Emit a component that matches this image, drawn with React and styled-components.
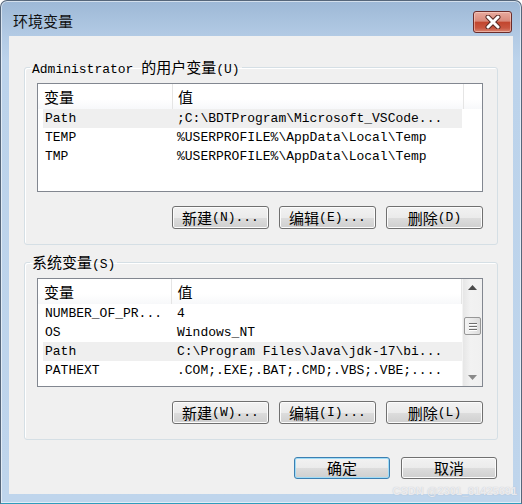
import React from "react";
import styled, { createGlobalStyle } from "styled-components";

const GlobalStyle = createGlobalStyle`
    html, body {
        margin: 0;
        padding: 0;
        background: #ffffff;
    }
    body {
        font-family: "Liberation Mono", "Noto Sans CJK SC", monospace;
    }
`;

// Split a label into latin runs and han runs so the CJK glyphs get their own size.
function Mixed({ text }) {
    const parts = text.split(/([\u4e00-\u9fff]+)/).filter(Boolean);
    return parts.map((p, i) =>
        /[\u4e00-\u9fff]/.test(p) ? <Han key={i}>{p}</Han> : <span key={i}>{p}</span>
    );
}

const userVars = [
    ["Path", ";C:\\BDTProgram\\Microsoft_VSCode...", true],
    ["TEMP", "%USERPROFILE%\\AppData\\Local\\Temp"],
    ["TMP", "%USERPROFILE%\\AppData\\Local\\Temp"],
];

const systemVars = [
    ["NUMBER_OF_PR...", "4"],
    ["OS", "Windows_NT"],
    ["Path", "C:\\Program Files\\Java\\jdk-17\\bi...", true],
    ["PATHEXT", ".COM;.EXE;.BAT;.CMD;.VBS;.VBE;...."],
];

function VarList({ rows, scroll }) {
    return (
        <ListView>
            <ListBody>
                <Header>
                    <HeadCell width={135}>
                        <Han>变量</Han>
                    </HeadCell>
                    <HeadCell width={291} pad={5}>
                        <Han>值</Han>
                    </HeadCell>
                    {!scroll && <HeadFill />}
                </Header>
                {rows.map(([name, value, hot]) => (
                    <Row key={name} hot={hot}>
                        <Cell>{name}</Cell>
                        <Cell>{value}</Cell>
                    </Row>
                ))}
            </ListBody>
            {scroll && (
                <ScrollBar>
                    <ArrowBox>
                        <svg width="9" height="5" viewBox="0 0 9 5">
                            <polygon points="0,5 4.5,0 9,5" fill="#4a4a4a" />
                        </svg>
                    </ArrowBox>
                    <Track>
                        <Thumb>
                            <Grip />
                            <Grip />
                            <Grip />
                        </Thumb>
                    </Track>
                    <ArrowBox>
                        <svg width="9" height="5" viewBox="0 0 9 5">
                            <polygon points="0,0 4.5,5 9,0" fill="#8a8a8a" />
                        </svg>
                    </ArrowBox>
                </ScrollBar>
            )}
        </ListView>
    );
}

function VarGroup({ title, rows, scroll, keys, first }) {
    return (
        <Group first={first}>
            <Legend>
                <Mixed text={title} />
            </Legend>
            <VarList rows={rows} scroll={scroll} />
            <ButtonRow>
                <Button>
                    <Mixed text={`新建(${keys[0]})...`} />
                </Button>
                <Button>
                    <Mixed text={`编辑(${keys[1]})...`} />
                </Button>
                <Button>
                    <Mixed text={`删除(${keys[2]})`} />
                </Button>
            </ButtonRow>
        </Group>
    );
}

export default function App() {
    return (
        <>
            <GlobalStyle />
            <Window>
                <TitleBar>
                    <Title>环境变量</Title>
                    <CloseButton aria-label="close">
                        <svg width="16" height="14" viewBox="0 0 16 14">
                            <path
                                d="M3 2 L13 12 M13 2 L3 12"
                                stroke="#5a2a24"
                                strokeWidth="5"
                                strokeLinecap="round"
                            />
                            <path
                                d="M3 2 L13 12 M13 2 L3 12"
                                stroke="#ffffff"
                                strokeWidth="3"
                                strokeLinecap="round"
                            />
                        </svg>
                    </CloseButton>
                </TitleBar>
                <Client>
                    <VarGroup
                        first
                        title="Administrator 的用户变量(U)"
                        rows={userVars}
                        keys={["N", "E", "D"]}
                    />
                    <VarGroup
                        title="系统变量(S)"
                        rows={systemVars}
                        scroll
                        keys={["W", "I", "L"]}
                    />
                    <Footer>
                        <Button wide isDefault>
                            <Han>确定</Han>
                        </Button>
                        <Button wide>
                            <Han>取消</Han>
                        </Button>
                    </Footer>
                </Client>
                <Watermark>CSDN @2301_81425691</Watermark>
            </Window>
        </>
    );
}

/**
 * STYLES
 */
const Han = styled.span`
    font-family: "Noto Sans CJK SC", sans-serif;
    font-size: 15px;
`;

const Window = styled.div`
    position: relative;
    width: 522px;
    height: 504px;
    box-sizing: border-box;
    display: flex;
    flex-direction: column;
    padding: 0 0 9px;
    border: 1px solid #56667a;
    border-bottom-color: #2f9cbc;
    border-radius: 7px 7px 0 0;
    background: linear-gradient(to bottom, #9db8d6 0px, #b2cae4 34px, #bcd3eb 60px, #bfd5ec 100%);
    box-shadow: inset 0 0 0 1px rgba(255, 255, 255, 0.55);
`;

const TitleBar = styled.div`
    height: 35px;
    box-sizing: border-box;
    display: flex;
    align-items: flex-start;
    justify-content: space-between;
    padding: 10px 9px 0 12px;
`;

const Title = styled.div`
    font-family: "Noto Sans CJK SC", sans-serif;
    font-size: 15px;
    line-height: 20px;
    color: #111;
`;

const CloseButton = styled.div`
    width: 39px;
    height: 22px;
    box-sizing: border-box;
    display: flex;
    align-items: center;
    justify-content: center;
    border: 1px solid #6b2c2a;
    border-radius: 3px;
    background: linear-gradient(
        to bottom,
        #e8aa9e 0%,
        #d98a7b 45%,
        #c2462f 52%,
        #c95640 80%,
        #d88672 100%
    );
    box-shadow: inset 0 0 0 1px rgba(255, 220, 210, 0.5);
`;

const Client = styled.div`
    flex: 1;
    margin: 0 8px;
    padding: 23px 15px 0;
    background: #f0f0f0;
    display: flex;
    flex-direction: column;
`;

const Group = styled.fieldset`
    margin: ${(p) => (p.first ? "0" : "9px")} 0 0;
    padding: 8px 14px 15px 12px;
    border: 1px solid #d5dfe5;
    border-radius: 3px;
    box-shadow: inset 1px 1px 0 #ffffff;
    min-width: 0;
`;

const Legend = styled.legend`
    margin-left: -7px;
    padding: 0 2px;
    height: 16px;
    display: flex;
    align-items: baseline;
    font-size: 13px;
    line-height: 16px;
    color: #000;
    white-space: pre;
`;

const ListView = styled.div`
    height: 109px;
    box-sizing: border-box;
    border: 1px solid #828790;
    background: #ffffff;
    display: flex;
`;

const ListBody = styled.div`
    flex: 1;
    min-width: 0;
`;

const Header = styled.div`
    height: 25px;
    display: flex;
    background: linear-gradient(to bottom, #ffffff 0%, #ffffff 60%, #f7f8fa 100%);
`;

const HeadCell = styled.div`
    width: ${(p) => p.width}px;
    box-sizing: border-box;
    padding-left: ${(p) => p.pad || 6}px;
    border-right: 1px solid #e5e5e5;
    display: flex;
    align-items: center;
    color: #000;
`;

const HeadFill = styled.div`
    flex: 1;
`;

const Row = styled.div`
    margin-left: 5px;
    width: 419px;
    height: 19px;
    display: grid;
    grid-template-columns: 132px 1fr;
    background: ${(p) => (p.hot ? "#efefef" : "transparent")};
`;

const Cell = styled.div`
    padding-left: 2px;
    font-size: 13px;
    line-height: 19px;
    color: #000;
    white-space: pre;
    overflow: hidden;
`;

const ScrollBar = styled.div`
    width: 19px;
    display: flex;
    flex-direction: column;
    background: linear-gradient(to right, #e6e6e6 0%, #f2f2f2 40%, #f0f0f0 100%);
    border-left: 1px solid #f4f4f4;
`;

const ArrowBox = styled.div`
    height: 17px;
    display: flex;
    align-items: center;
    justify-content: center;
`;

const Track = styled.div`
    flex: 1;
    padding-top: 21px;
`;

const Thumb = styled.div`
    height: 18px;
    margin: 0 1px;
    box-sizing: border-box;
    border: 1px solid #979797;
    border-radius: 2px;
    background: linear-gradient(to right, #f3f3f3 0%, #e9e9e9 50%, #dcdcdc 100%);
    display: flex;
    flex-direction: column;
    justify-content: center;
    align-items: center;
    gap: 2px;
`;

const Grip = styled.div`
    width: 8px;
    height: 1px;
    background: #6f6f6f;
    box-shadow: 0 1px 0 #ffffff;
`;

const ButtonRow = styled.div`
    margin-top: 14px;
    display: flex;
    justify-content: flex-end;
    gap: 10px;
`;

const Button = styled.div`
    width: ${(p) => (p.wide ? 96 : 97)}px;
    height: ${(p) => (p.wide ? 22 : 23)}px;
    box-sizing: border-box;
    display: flex;
    align-items: center;
    justify-content: center;
    border: 1px solid ${(p) => (p.isDefault ? "#3c7fb1" : "#707070")};
    border-radius: 3px;
    background: linear-gradient(to bottom, #f2f2f2 0%, #ebebeb 50%, #dddddd 51%, #cfcfcf 100%);
    box-shadow: inset 0 0 0 1px ${(p) => (p.isDefault ? "#9fdcf7" : "#fcfcfc")};
    font-size: 13px;
    line-height: 20px;
    color: #000;
    white-space: pre;
`;

const Footer = styled.div`
    margin-top: 17px;
    padding-right: 1px;
    display: flex;
    justify-content: flex-end;
    gap: 11px;
`;

const Watermark = styled.div`
    position: absolute;
    right: 4px;
    bottom: 6px;
    font-family: "Liberation Sans", sans-serif;
    font-size: 11px;
    font-weight: bold;
    color: rgba(240, 240, 244, 0.9);
    text-shadow: 0 0 1px rgba(140, 150, 160, 0.5);
`;
